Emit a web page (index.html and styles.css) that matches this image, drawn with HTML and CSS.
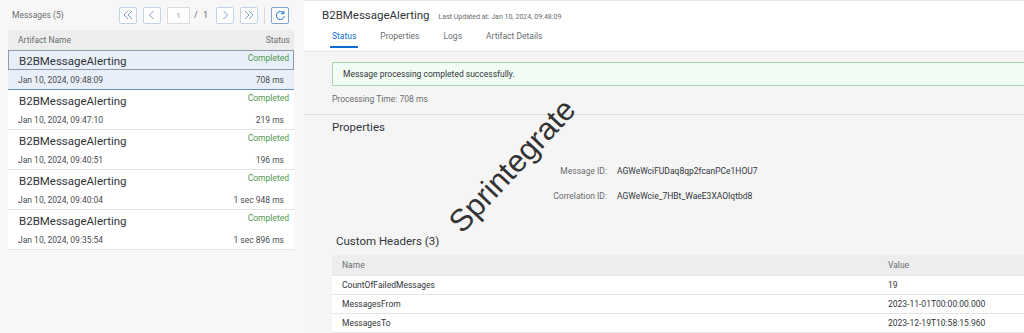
FILE: index.html
```html
<!DOCTYPE html>
<html lang="en">
<head>
    <title>Message Monitor</title>
    <meta charset="utf-8">
    <meta name="viewport" content="width=device-width, initial-scale=1">
    <link rel="stylesheet" href="styles.css">
</head>
<body>
<div class="page">
    <aside class="list-panel">
        <div class="list-toolbar">
            <span class="list-count">Messages (5)</span>
            <div class="pager">
                <button class="pager-btn" type="button">
                    <svg width="10" height="10" viewBox="0 0 10 10"><path d="M5 1 1 5l4 4M9 1 5 5l4 4" fill="none" stroke="#7f9cc4" stroke-width="1"/></svg>
                </button>
                <button class="pager-btn" type="button">
                    <svg width="10" height="10" viewBox="0 0 10 10"><path d="M6.5 1 2.5 5l4 4" fill="none" stroke="#7f9cc4" stroke-width="1"/></svg>
                </button>
                <span class="pager-input">1</span>
                <span class="pager-total">/ 1</span>
                <button class="pager-btn" type="button">
                    <svg width="10" height="10" viewBox="0 0 10 10"><path d="M3.5 1l4 4-4 4" fill="none" stroke="#7f9cc4" stroke-width="1"/></svg>
                </button>
                <button class="pager-btn" type="button">
                    <svg width="10" height="10" viewBox="0 0 10 10"><path d="M1 1l4 4-4 4M5 1l4 4-4 4" fill="none" stroke="#7f9cc4" stroke-width="1"/></svg>
                </button>
                <span class="pager-sep"></span>
                <button class="pager-btn pager-btn-active" type="button">
                    <svg width="11" height="11" viewBox="0 0 11 11"><path d="M8.6 3.2A4 4 0 1 0 9.3 6.2" fill="none" stroke="#0a6ed1" stroke-width="1"/><path d="M8.9 0.8v2.9H6" fill="none" stroke="#0a6ed1" stroke-width="1"/></svg>
                </button>
            </div>
        </div>
        <div class="msg-table">
            <div class="msg-head">
                <span>Artifact Name</span>
                <span>Status</span>
            </div>
            <div class="msg-row msg-row-selected">
                <div class="msg-line msg-line-top">
                    <span class="msg-name">B2BMessageAlerting</span>
                    <span class="msg-status">Completed</span>
                </div>
                <div class="msg-line">
                    <span class="msg-date">Jan 10, 2024, 09:48:09</span>
                    <span class="msg-time">708 ms</span>
                </div>
            </div>
            <div class="msg-row">
                <div class="msg-line msg-line-top">
                    <span class="msg-name">B2BMessageAlerting</span>
                    <span class="msg-status">Completed</span>
                </div>
                <div class="msg-line">
                    <span class="msg-date">Jan 10, 2024, 09:47:10</span>
                    <span class="msg-time">219 ms</span>
                </div>
            </div>
            <div class="msg-row">
                <div class="msg-line msg-line-top">
                    <span class="msg-name">B2BMessageAlerting</span>
                    <span class="msg-status">Completed</span>
                </div>
                <div class="msg-line">
                    <span class="msg-date">Jan 10, 2024, 09:40:51</span>
                    <span class="msg-time">196 ms</span>
                </div>
            </div>
            <div class="msg-row">
                <div class="msg-line msg-line-top">
                    <span class="msg-name">B2BMessageAlerting</span>
                    <span class="msg-status">Completed</span>
                </div>
                <div class="msg-line">
                    <span class="msg-date">Jan 10, 2024, 09:40:04</span>
                    <span class="msg-time">1 sec 948 ms</span>
                </div>
            </div>
            <div class="msg-row">
                <div class="msg-line msg-line-top">
                    <span class="msg-name">B2BMessageAlerting</span>
                    <span class="msg-status">Completed</span>
                </div>
                <div class="msg-line">
                    <span class="msg-date">Jan 10, 2024, 09:35:54</span>
                    <span class="msg-time">1 sec 896 ms</span>
                </div>
            </div>
        </div>
    </aside>

    <main class="detail">
        <header class="detail-header">
            <div class="detail-title-row">
                <h1 class="detail-title">B2BMessageAlerting</h1>
                <span class="detail-updated">Last Updated at: Jan 10, 2024, 09:48:09</span>
            </div>
            <nav class="tabs">
                <span class="tab tab-active">Status</span>
                <span class="tab">Properties</span>
                <span class="tab">Logs</span>
                <span class="tab">Artifact Details</span>
            </nav>
        </header>

        <section class="status-section">
            <div class="strip-success">Message processing completed successfully.</div>
            <div class="processing-time">Processing Time: 708 ms</div>
        </section>

        <section class="props-section">
            <h2 class="section-title">Properties</h2>
            <div class="props-grid">
                <span class="prop-label">Message ID:</span>
                <span class="prop-value">AGWeWciFUDaq8qp2fcanPCe1HOU7</span>
                <span class="prop-label">Correlation ID:</span>
                <span class="prop-value">AGWeWcie_7HBt_WaeE3XAOIqtbd8</span>
            </div>

            <h2 class="section-title headers-title">Custom Headers (3)</h2>
            <div class="hdr-table">
                <div class="hdr-row hdr-row-head">
                    <span>Name</span>
                    <span>Value</span>
                </div>
                <div class="hdr-row">
                    <span>CountOfFailedMessages</span>
                    <span>19</span>
                </div>
                <div class="hdr-row">
                    <span>MessagesFrom</span>
                    <span>2023-11-01T00:00:00.000</span>
                </div>
                <div class="hdr-row">
                    <span>MessagesTo</span>
                    <span>2023-12-19T10:58:15.960</span>
                </div>
            </div>
        </section>

        <div class="watermark">Sprintegrate</div>
    </main>
</div>
</body>
</html>
```

FILE: styles.css
```css
*, *::before, *::after {
    margin: 0;
    padding: 0;
    box-sizing: border-box;
}

body {
    height: 333px;
    overflow: hidden;
    background-color: #f5f5f5;
    color: #32363a;
    font-family: "Roboto", "Liberation Sans", sans-serif;
    font-size: 9px;
}

.page {
    display: flex;
    height: 100%;
}

/* left list */

.list-panel {
    width: 304px;
    flex-shrink: 0;
    padding: 0 10px 0 8px;
    background-color: #f7f7f7;
}

.list-toolbar {
    height: 30px;
    display: flex;
    align-items: center;
    justify-content: space-between;
    padding-left: 4px;
    padding-right: 5px;
}

.list-count {
    color: #6a6d70;
    font-size: 8.5px;
}

.pager {
    display: flex;
    align-items: center;
}

.pager-btn {
    width: 18px;
    height: 17px;
    display: flex;
    align-items: center;
    justify-content: center;
    margin-left: 6px;
    border: 1px solid #c4d3e8;
    border-radius: 2px;
    background-color: #ffffff;
}

.pager-btn-active {
    border-color: #7fa6d6;
    margin-left: 6px;
}

.pager-input {
    width: 23px;
    height: 17px;
    margin-left: 6px;
    border: 1px solid #dcdcdc;
    background-color: #ffffff;
    color: #9a9a9a;
    font-size: 8px;
    line-height: 15px;
    text-align: center;
}

.pager-total {
    margin-left: 4px;
    margin-right: 2px;
    color: #6a6d70;
    font-size: 9px;
    word-spacing: 3px;
}

.pager-sep {
    width: 1px;
    height: 17px;
    margin-left: 6px;
    background-color: #d9d9d9;
}

.msg-head {
    height: 20px;
    display: flex;
    align-items: center;
    justify-content: space-between;
    padding: 0 4px 0 10px;
    background-color: #ededed;
    color: #6a6d70;
    font-size: 8.5px;
}

.msg-row {
    height: 40px;
    background-color: #ffffff;
    border-bottom: 1px solid #e5e5e5;
}

.msg-row-selected {
    background-color: #e8eff8;
    border-bottom: 1px solid #6b8fc4;
}

.msg-row-selected .msg-line-top {
    border: 1px solid #8e9aab;
}

.msg-line {
    height: 20px;
    display: flex;
    align-items: center;
    justify-content: space-between;
    padding: 0 10px 0 10px;
}

.msg-line-top {
    align-items: flex-start;
    padding-top: 2px;
    padding-right: 4px;
    border: 1px solid transparent;
}

.msg-name {
    font-size: 11.5px;
    line-height: 16px;
}

.msg-status {
    color: #4e9a4e;
    font-size: 8.5px;
    line-height: 11px;
}

.msg-date, .msg-time {
    color: #4a4d50;
    font-size: 8.5px;
}

/* right detail */

.detail {
    position: relative;
    flex: 1;
    overflow: hidden;
}

.detail-header {
    height: 52px;
    padding: 0 0 0 18px;
    background-color: #ffffff;
    border-top: 1px solid #e8e8e8;
    border-bottom: 1px solid #e5e5e5;
}

.detail-title-row {
    display: flex;
    align-items: baseline;
    padding-top: 7px;
}

.detail-title {
    font-size: 11.5px;
    font-weight: 400;
}

.detail-updated {
    margin-left: 9px;
    color: #6a6d70;
    font-size: 7px;
}

.tabs {
    display: flex;
    margin-top: 9px;
    margin-left: 8px;
}

.tab {
    margin-right: 20px;
    padding: 0 2px 5px;
    color: #6a6d70;
    font-size: 8.5px;
}

.tab-active {
    color: #0a6ed1;
    border-bottom: 2px solid #0a6ed1;
}

.status-section {
    padding: 10px 0 10px 28px;
    border-bottom: 1px solid #e2e2e2;
}

.strip-success {
    height: 24px;
    padding-left: 10px;
    border: 1px solid #a8d2a8;
    border-right: none;
    border-radius: 2px 0 0 2px;
    background-color: #f1fcf4;
    font-size: 8.5px;
    line-height: 22px;
}

.processing-time {
    margin-top: 8px;
    color: #6a6d70;
    font-size: 8.5px;
}

.props-section {
    padding: 5px 0 0 28px;
}

.section-title {
    font-size: 11.5px;
    font-weight: 400;
}

.props-grid {
    display: grid;
    grid-template-columns: 275px auto;
    column-gap: 10px;
    row-gap: 15px;
    margin-top: 32px;
}

.prop-label {
    color: #6a6d70;
    font-size: 8.5px;
    text-align: right;
}

.prop-value {
    font-size: 8.5px;
}

.headers-title {
    margin-top: 33px;
    margin-left: 4px;
}

.hdr-table {
    margin-top: 7px;
}

.hdr-row {
    height: 19px;
    display: grid;
    grid-template-columns: 546px auto;
    align-items: center;
    padding-left: 10px;
    background-color: #ffffff;
    border-bottom: 1px solid #e5e5e5;
    font-size: 8.5px;
    color: #32363a;
}

.hdr-row-head {
    height: 21px;
    background-color: #ededed;
    color: #6a6d70;
}

.watermark {
    position: absolute;
    left: 124px;
    top: 148px;
    transform: rotate(-47deg);
    color: #333333;
    font-family: "Liberation Sans", sans-serif;
    font-size: 31px;
}
```
